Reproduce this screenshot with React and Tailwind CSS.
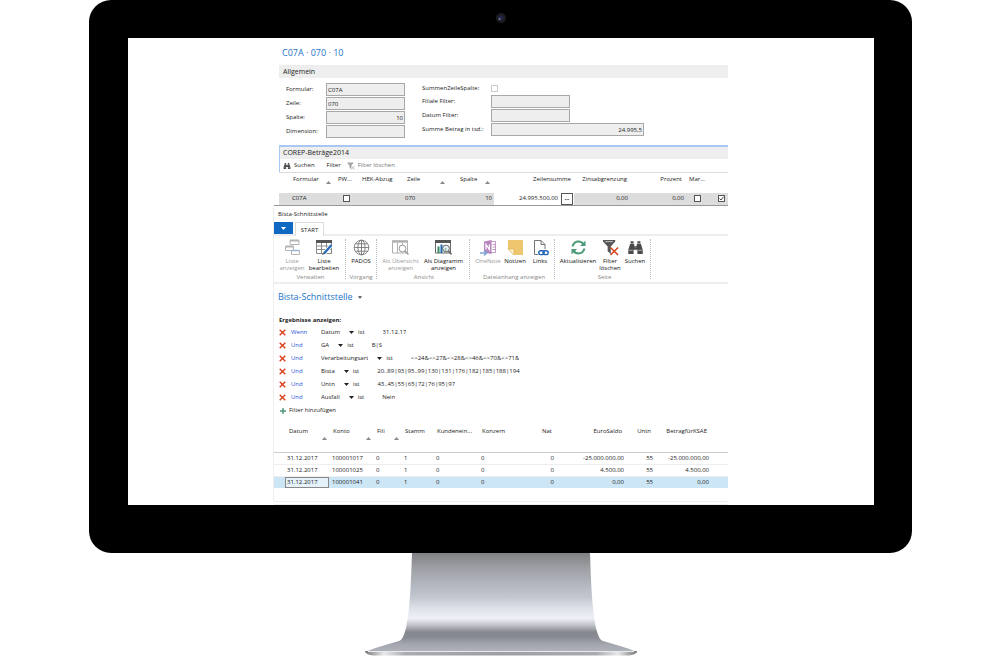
import React from 'react';

const formLeft = [
  { id: 'formular', label: 'Formular:', value: 'C07A' },
  { id: 'zeile', label: 'Zeile:', value: '070' },
  { id: 'spalte', label: 'Spalte:', value: '10', right: true },
  { id: 'dimension', label: 'Dimension:', value: '' },
];

const formRight = [
  { id: 'filiale', label: 'Filiale Filter:', value: '' },
  { id: 'datumfilter', label: 'Datum Filter:', value: '' },
  { id: 'summe', label: 'Summe Betrag in tsd.:', value: '24.995,5', right: true, wide: true },
];

const filters = [
  { word: 'Wenn', field: 'Datum', value: '31.12.17' },
  { word: 'Und', field: 'GA', value: 'B|S' },
  { word: 'Und', field: 'Verarbeitungsart', value: '<>24&<>27&<>28&<>46&<>70&<>71&' },
  { word: 'Und', field: 'Bista', value: '20..89|93|95..99|130|131|176|182|185|188|194' },
  { word: 'Und', field: 'Untn', value: '43..45|55|65|72|76|95|97' },
  { word: 'Und', field: 'Ausfall', value: 'Nein' },
];

const entries = [
  ['31.12.2017', '100001017', '0', '1', '0', '0', '0', '-25.000.000,00', '55', '-25.000.000,00'],
  ['31.12.2017', '100001025', '0', '1', '0', '0', '0', '4.500,00', '55', '4.500,00'],
  ['31.12.2017', '100001041', '0', '1', '0', '0', '0', '0,00', '55', '0,00'],
];

const entryHeads = [
  { name: 'Datum', sort: true },
  { name: 'Konto', sort: true },
  { name: 'Fili', sort: true },
  { name: 'Stamm' },
  { name: 'Kundenein...' },
  { name: 'Konzern' },
  { name: 'Nat', right: true },
  { name: 'EuroSaldo', right: true },
  { name: 'Untn', right: true },
  { name: 'BetragfürKSAE', right: true },
];

const SortMark = () => (
  <svg className="w-[5px] h-[3px] mb-[2px] shrink-0" viewBox="0 0 5 3">
    <path d="M0 3 2.5 0 5 3z" fill="#888" />
  </svg>
);

const Caret = ({ className }) => (
  <svg className={className} viewBox="0 0 5 3">
    <path d="M0 0h5L2.5 3z" fill="currentColor" />
  </svg>
);

const Binoculars = ({ className }) => (
  <svg className={className} viewBox="0 0 16 16" fill="#4a4a4a">
    <path d="M3.4 2h2.8v2H3.4zM9.8 2h2.8v2H9.8zM3 4.400h3.8v2.2h2.4V4.400H13l1.800 5.800V14H9.8v-3.800H6.2V14H1.200v-3.800z" />
    <path d="M1.6 10.6h3.8M10.6 10.6h3.8M7.2 7.6h1.6" stroke="#bbb" strokeWidth=".8" />
  </svg>
);

const FilterClear = ({ className, funnel, cross }) => (
  <svg className={className} viewBox="0 0 18 18">
    <path d="M1 1h13v1.6L9.3 8v8L6 13V8L1 2.6z" fill={funnel} />
    <path d="M3.5 2.8h8" stroke="#fff" strokeWidth=".7" />
    <path d="M9 9l8 8M17 9l-8 8" stroke={cross} strokeWidth="1.6" fill="none" />
  </svg>
);

const ListIcon = () => (
  <svg className="w-[17px] h-[17px]" viewBox="0 0 17 17" fill="#fff" stroke="#b4b4b4">
    <path d="M6 1.5h9v4H6zM1.5 7.5h8v4h-8zM7.5 11.5h8v4h-8z" />
    <path d="M6 1.5h9M1.5 7.5h8" strokeWidth="2" />
    <path d="M7.5 11.5h8" stroke="#9bb5d4" strokeWidth="1.5" />
  </svg>
);

const ListEditIcon = () => (
  <svg className="w-[17px] h-[17px]" viewBox="0 0 17 17" fill="none" stroke="#8a8a8a">
    <path d="M.5 2h15v12.5H.5zM.5 7h15M.5 10.5h15M5.5 3v11.5M10.5 3v11.5" />
    <path d="M0 2.5h16" stroke="#555" strokeWidth="3" />
    <path d="M15.5 6 8 14.5" stroke="#fff" strokeWidth="4" />
    <path d="M15.5 6 8 14.5" stroke="#1f66b5" strokeWidth="2.2" />
    <path d="m8.5 13.6-2 2.4" stroke="#444" />
  </svg>
);

const GlobeIcon = () => (
  <svg className="w-[17px] h-[17px]" viewBox="0 0 17 17" fill="none" stroke="#777" strokeWidth=".9">
    <circle cx="8.5" cy="8.5" r="7.3" />
    <ellipse cx="8.5" cy="8.5" rx="3.6" ry="7.3" />
    <path d="M8.5 1.2v14.6M1.2 8.5h14.6M2.4 4.8h12.2M2.4 12.2h12.2" />
  </svg>
);

const OverviewIcon = () => (
  <svg className="w-[17px] h-[17px]" viewBox="0 0 17 17" fill="none" stroke="#b0b0b0">
    <path d="M.5 2h15v12H.5zM5.5 4v10M10.5 4v4" />
    <path d="M0 2.5h16" strokeWidth="2.4" />
    <circle cx="10.5" cy="9.5" r="3.4" fill="#fff" stroke="#999" />
    <path d="m13 12 3.5 3.5" stroke="#999" strokeWidth="1.4" />
  </svg>
);

const ChartIcon = () => (
  <svg className="w-[17px] h-[17px]" viewBox="0 0 17 17" fill="none" stroke="#666">
    <path d="M.5 2h15v12H.5z" />
    <path d="M0 2.5h16" strokeWidth="3" stroke="#555" />
    <path d="M3.5 14V7.5" stroke="#2e8b62" strokeWidth="2" />
    <path d="M6.5 14V5.5" stroke="#1f66b5" strokeWidth="2" />
    <circle cx="11" cy="9.5" r="3.4" fill="#e4eef7" />
    <path d="M10.500 12V9" stroke="#8fc0aa" strokeWidth="1.6" />
    <path d="m13.4 12 3.2 3.4" strokeWidth="1.6" />
  </svg>
);

const OneNoteIcon = () => (
  <svg className="w-[17px] h-[17px]" viewBox="0 0 17 17" fill="none">
    <path d="M10 2.5h5.5v11H10M12.5 5.5h3M12.5 8h3M12.5 10.5h3" stroke="#c09ac4" />
    <path d="M4 2.5 11.5 1v14L4 13.5z" fill="#b884bd" />
    <path d="M6 10.5v-5l3.4 5v-5" stroke="#fff" strokeWidth="1.2" />
    <path d="M0 14h6M4 11.5 6.8 14 4 16.5" stroke="#7da7d6" strokeWidth="1.4" />
  </svg>
);

const NoteIcon = () => (
  <svg className="w-[17px] h-[17px]" viewBox="0 0 17 17">
    <path d="M1 1h15v15H7l-6-6z" fill="#eec66d" />
    <path d="M1 10h6v6z" fill="#fdf0cd" stroke="#d9ac48" strokeWidth=".6" />
  </svg>
);

const LinkIcon = () => (
  <svg className="w-[17px] h-[17px]" viewBox="0 0 17 17" fill="none">
    <path d="M2.5 1.5h6.5l4 4V10M2.5 1.5v14H6M9 1.5v4h4" stroke="#777" />
    <rect x="6.8" y="11.8" width="5.4" height="3.8" rx="1.9" stroke="#1f66b5" strokeWidth="1.4" />
    <rect x="11" y="11.8" width="5.2" height="3.8" rx="1.9" stroke="#1f66b5" strokeWidth="1.4" />
  </svg>
);

const RefreshIcon = () => (
  <svg className="w-[17px] h-[17px]" viewBox="0 0 17 17" fill="none" stroke="#4a9a77" strokeWidth="2">
    <path d="M2.5 7.5C3.5 4 6 2.5 8.5 2.5c2.3 0 4 1 5 3" />
    <path d="M14.5 9.5c-1 3.5-3.5 5-6 5-2.3 0-4-1-5-3" />
    <path d="M15.5 1.5V7H10zM1.5 15.5V10H7z" fill="#4a9a77" stroke="none" />
  </svg>
);

const groups = [
  {
    name: 'Verwalten',
    box: 'w-[72px] pl-[2px]',
    items: [
      { lines: ['Liste', 'anzeigen'], icon: <ListIcon />, width: 'w-8', off: true },
      { lines: ['Liste', 'bearbeiten'], icon: <ListEditIcon />, width: 'w-8' },
    ],
  },
  {
    name: 'Vorgang',
    box: 'w-[31px]',
    items: [{ lines: ['PADOS'], icon: <GlobeIcon />, width: 'w-[30px]' }],
  },
  {
    name: 'Ansicht',
    box: 'w-[93px] pl-[2px]',
    items: [
      { lines: ['Als Übersicht', 'anzeigen'], icon: <OverviewIcon />, width: 'w-[43px]', off: true },
      { lines: ['Als Diagramm', 'anzeigen'], icon: <ChartIcon />, width: 'w-[43px]' },
    ],
  },
  {
    name: 'Dateianhang anzeigen',
    box: 'w-[85px] pl-1',
    items: [
      { lines: ['OneNote'], icon: <OneNoteIcon />, width: 'w-7', off: true },
      { lines: ['Notizen'], icon: <NoteIcon />, width: 'w-[26px]' },
      { lines: ['Links'], icon: <LinkIcon />, width: 'w-6' },
    ],
  },
  {
    name: 'Seite',
    box: 'w-24 pl-1',
    items: [
      { lines: ['Aktualisieren'], icon: <RefreshIcon />, width: 'w-[38px]' },
      { lines: ['Filter', 'löschen'], icon: <FilterClear className="w-[17px] h-[17px]" funnel="#555" cross="#d9401c" />, width: 'w-[26px]' },
      { lines: ['Suchen'], icon: <Binoculars className="w-[17px] h-[17px]" />, width: 'w-6' },
    ],
  },
];

const Field = ({ id, label, value, right, wide, labelWidth }) => (
  <div className="flex items-center h-[13px]">
    <label htmlFor={id} className={`${labelWidth} shrink-0`}>{label}</label>
    <input
      id={id}
      readOnly
      defaultValue={value}
      className={`h-[13px] min-w-0 px-px leading-[11px] bg-[#eee] border border-[#a8a8a8] ${wide ? 'w-[153px]' : 'w-[79px]'} ${right ? 'text-right' : ''}`}
    />
  </div>
);

const Check = ({ label, checked, faint }) => (
  <span className="relative flex w-[7px] h-[7px]">
    <input
      type="checkbox"
      aria-label={label}
      defaultChecked={checked}
      className={`appearance-none w-[7px] h-[7px] bg-white border ${faint ? 'border-[#ccc]' : 'border-[#555]'}`}
    />
    {checked && (
      <svg className="absolute inset-0 pointer-events-none" viewBox="0 0 7 7" fill="none">
        <path d="M1.5 3.5 3 5l2.500-3.200" stroke="#333" strokeWidth=".9" />
      </svg>
    )}
  </span>
);

const CardForm = () => (
  <section className="pl-[5px]">
    <h1 className="pt-2 pb-[5px] pl-[3px] text-[9px] leading-[14px] text-[#1a73c7]">C07A · 070 · 10</h1>
    <h2 className="h-[13px] pl-1 bg-[#eee] text-[7px] leading-[13px]">Allgemein</h2>
    <div className="flex pt-[5px] pl-[7px] pb-[7px]">
      <div className="flex flex-col gap-px w-[136px]">
        {formLeft.map((f) => <Field key={f.id} {...f} labelWidth="w-10" />)}
      </div>
      <div className="flex flex-col gap-px">
        <div className="flex items-center h-[11px]">
          <span className="w-[69px]">SummenZeileSpalte:</span>
          <Check label="SummenZeileSpalte" faint />
        </div>
        {formRight.map((f) => <Field key={f.id} {...f} labelWidth="w-[69px]" />)}
      </div>
    </div>
  </section>
);

const Amounts = () => (
  <section>
    <div className="ml-[5px] border-t-2 border-l border-[#a9c7f5]">
      <h2 className="h-3 pl-[3px] bg-[#eee] text-[7px] leading-[12px]">COREP-Beträge2014</h2>
      <div className="flex items-center h-[13px] pl-[3px]">
        <button className="flex items-center gap-[3px]"><Binoculars className="w-2 h-2" />Suchen</button>
        <button className="ml-3">Filter</button>
        <button className="flex items-center gap-[3px] ml-[6px] text-[#777]">
          <FilterClear className="w-2 h-2" funnel="#999" cross="#aaa" />Filter löschen
        </button>
      </div>
    </div>
    <table className="w-full table-fixed border-collapse whitespace-nowrap">
      <colgroup>
        <col className="w-[5px]" /><col className="w-[55px]" /><col className="w-6" /><col className="w-11" />
        <col className="w-[47px]" /><col className="w-[45px]" /><col className="w-20" /><col className="w-[57px]" />
        <col className="w-14" /><col className="w-[22px]" /><col className="w-[19px]" />
      </colgroup>
      <thead>
        <tr className="h-5 align-top text-left leading-[13px] [&>th]:font-normal [&>th]:p-0">
          <th />
          <th className="border-t border-[#ddd]"><div className="flex items-end justify-between pl-[14px] pr-[3px]">Formular<SortMark /></div></th>
          <th className="border-t border-[#ddd]"><div className="pl-1">PW...</div></th>
          <th className="border-t border-[#ddd]"><div className="pl-1">HEK-Abzug</div></th>
          <th className="border-t border-[#ddd]"><div className="flex items-end justify-between pl-[5px] pr-1">Zeile<SortMark /></div></th>
          <th className="border-t border-[#ddd]"><div className="flex items-end justify-between pl-[11px] pr-1">Spalte<SortMark /></div></th>
          <th className="border-t border-[#ddd]"><div className="pr-[3px] text-right">Zeilensumme</div></th>
          <th className="border-t border-[#ddd]"><div className="pr-1 text-right">Zinsabgrenzung</div></th>
          <th className="border-t border-[#ddd]"><div className="pr-[5px] text-right">Prozent</div></th>
          <th className="border-t border-[#ddd]"><div className="pl-[2px]">Mar...</div></th>
          <th className="border-t border-[#ddd]" />
        </tr>
      </thead>
      <tbody>
        <tr className="h-[13px] border-b border-[#999] leading-[11px] [&>td]:p-0">
          <td />
          <td className="bg-[#ddd]"><div className="pl-[13px]">C07A</div></td>
          <td className="bg-[#ddd]"><div className="pl-[9px]"><Check label="PW" /></div></td>
          <td className="bg-[#ddd]" />
          <td className="bg-[#ddd]"><div className="pl-[3px]">070</div></td>
          <td className="bg-[#ddd]"><div className="pr-[2px] text-right">10</div></td>
          <td>
            <div className="flex items-center justify-end gap-[3px] pr-px">
              24.995.500,00
              <button className="w-3 h-3 border border-[#555] bg-white font-bold leading-[7px]">...</button>
            </div>
          </td>
          <td className="bg-[#ddd]"><div className="pr-[3px] text-right">0,00</div></td>
          <td className="bg-[#ddd]"><div className="pr-[3px] text-right">0,00</div></td>
          <td className="bg-[#ddd]"><div className="pl-[7px]"><Check label="Markiert" /></div></td>
          <td className="bg-[#ddd]"><div className="pl-[9px]"><Check label="Aktiv" checked /></div></td>
        </tr>
      </tbody>
    </table>
  </section>
);

const Ribbon = () => (
  <nav>
    <div className="h-4 pl-1 leading-4">Bista-Schnittstelle</div>
    <div className="flex h-3">
      <button aria-label="Menü" className="flex items-center justify-center w-[19px] bg-[#0f68c2] text-white">
        <Caret className="w-[5px] h-[3px]" />
      </button>
      <button className="relative z-10 w-[29px] h-[14px] ml-[2px] border border-b-0 border-[#ddd] bg-white leading-[12px]">START</button>
    </div>
    <div className="flex h-[50px] pt-[3px] border-y-2 border-[#eee]">
      {groups.map((g) => (
        <div key={g.name} className={`flex flex-col justify-between h-10 border-r border-dotted border-[#bbb] ${g.box}`}>
          <div className="flex items-start">
            {g.items.map((item) => (
              <button
                key={item.lines.join(' ')}
                disabled={item.off}
                className={`flex flex-col items-center gap-[2px] leading-[7px] whitespace-nowrap ${item.width} ${item.off ? 'text-[#999]' : 'text-[#111]'}`}
              >
                {item.icon}
                <span className="flex flex-col items-center">
                  {item.lines.map((line) => <span key={line}>{line}</span>)}
                </span>
              </button>
            ))}
          </div>
          <div className="h-1 text-center leading-[4px] whitespace-nowrap text-[#888]">{g.name}</div>
        </div>
      ))}
    </div>
  </nav>
);

const FilterPane = () => (
  <section className="pl-[5px]">
    <h1 className="flex items-center gap-[5px] pt-[6px] text-[9px] leading-[14px] text-[#1a73c7] -ml-px">
      Bista-Schnittstelle
      <Caret className="w-1 h-[3px] text-[#444]" />
    </h1>
    <h2 className="h-3 mt-[10px] font-bold leading-[12px]">Ergebnisse anzeigen:</h2>
    {filters.map((f) => (
      <div key={f.field} className="flex items-center h-[13px] leading-[13px]">
        <button aria-label={`${f.field} entfernen`} className="w-3">
          <svg className="w-[7px] h-[7px]" viewBox="0 0 7 7">
            <path d="m.7.7 5.6 5.6M6.3.7.7 6.3" stroke="#d9401c" strokeWidth="1.4" />
          </svg>
        </button>
        <span className="w-[30px] text-[#2a55d8]">{f.word}</span>
        <select aria-label="Feld" className="appearance-none field-sizing-content">
          <option>{f.field}</option>
        </select>
        <Caret className="w-[5px] h-[3px] ml-[9px] mr-1" />
        <span>ist</span>
        <input aria-label={`Wert ${f.field}`} defaultValue={f.value} className="field-sizing-content ml-[18px]" />
      </div>
    ))}
    <button className="flex items-center gap-[3px] h-[13px] pl-px">
      <svg className="w-[6px] h-[6px]" viewBox="0 0 6 6">
        <path d="M3 0v6M0 3h6" stroke="#4a9a77" strokeWidth="1.4" />
      </svg>
      Filter hinzufügen
    </button>
  </section>
);

const Entries = () => (
  <table className="w-full table-fixed border-collapse whitespace-nowrap">
    <colgroup>
      <col className="w-[11px]" /><col className="w-11" /><col className="w-11" /><col className="w-7" />
      <col className="w-8" /><col className="w-[45px]" /><col className="w-[42px]" /><col className="w-9" />
      <col className="w-[70px]" /><col className="w-[29px]" /><col className="w-14" /><col className="w-[17px]" />
    </colgroup>
    <thead>
      <tr className="h-[35px] align-top border-b border-[#ccc] [&>th]:font-normal [&>th]:p-0">
        <th />
        {entryHeads.map((h) => (
          <th key={h.name}>
            <div className={`pt-[10px] leading-[8px] ${h.right ? 'pr-1 text-right' : 'pl-1 text-left'}`}>{h.name}</div>
            {h.sort && <div className="flex justify-end pt-[2px] pr-[2px]"><SortMark /></div>}
          </th>
        ))}
        <th />
      </tr>
    </thead>
    <tbody>
      {entries.map((row, r) => (
        <tr key={row[1]} className={`h-3 leading-[11px] [&>td]:p-0 ${r === 2 ? 'bg-[#cde6f5]' : 'border-b border-[#eee]'}`}>
          <td />
          {row.map((cell, c) => (
            <td key={c}>
              <div className={`${c > 5 ? 'pr-[2px] text-right' : c === 0 ? 'pl-[2px]' : 'pl-[3px]'} ${c === 0 && r === 2 ? 'ring-1 ring-inset ring-[#888] bg-[#e6f2fa]' : ''}`}>
                {cell}
              </div>
            </td>
          ))}
          <td />
        </tr>
      ))}
    </tbody>
  </table>
);

const Stand = () => (
  <svg className="block w-[272px] h-[103px] mx-auto" viewBox="0 0 272 103">
    <defs>
      <linearGradient id="neck" x1="0" y1="0" x2="0" y2="1">
        <stop offset="0" stopColor="#808184" />
        <stop offset=".14" stopColor="#9b9da1" />
        <stop offset=".3" stopColor="#b0b4bc" />
        <stop offset=".45" stopColor="#c3c7cf" />
        <stop offset=".57" stopColor="#e0e3ea" />
        <stop offset=".66" stopColor="#eef0f8" />
        <stop offset=".72" stopColor="#c8cad0" />
        <stop offset=".8" stopColor="#85888f" />
        <stop offset=".85" stopColor="#878a92" />
        <stop offset=".92" stopColor="#a3a6ae" />
        <stop offset="1" stopColor="#b0b3bb" />
      </linearGradient>
      <linearGradient id="edge" x1="0" y1="0" x2="1" y2="0">
        <stop offset="0" stopColor="#777" />
        <stop offset=".07" stopColor="#e8e8ea" />
        <stop offset=".15" stopColor="#a9abb0" />
        <stop offset=".5" stopColor="#9c9ea4" />
        <stop offset=".85" stopColor="#a9abb0" />
        <stop offset=".93" stopColor="#e8e8ea" />
        <stop offset="1" stopColor="#777" />
      </linearGradient>
    </defs>
    <path d="M47 0h178c1 30 2 56 6 75 2 8 4 12 7 13 10 3 22 6 34 11H0c12-5 24-8 34-11 3-1 5-5 7-13 4-19 5-45 6-75z" fill="url(#neck)" />
    <path d="M0 98h272v1c-1 2-4 3-8 3.5H8C4 102 1 101 0 99z" fill="url(#edge)" />
    <path d="M3 98.500h266" stroke="#e9eaee" strokeWidth="1" />
  </svg>
);

const App = () => (
  <div className="min-h-screen bg-white pl-[89px] pr-[88px] font-['Open_Sans',sans-serif] text-[6px] text-[#222]">
    <main className="rounded-b-[22px] rounded-t-[22px] bg-black pl-[39px] pr-[38px] pb-12">
      <div className="flex items-center justify-center h-[38px] pb-[3px]">
        <svg className="w-[10px] h-[10px]" viewBox="0 0 10 10">
          <circle cx="5" cy="5" r="5" fill="#1c1c20" />
          <circle cx="5" cy="5" r="2.5" fill="#24244a" />
          <circle cx="3.5" cy="6" r="1" fill="#7a80a0" />
        </svg>
      </div>
      <div className="bg-white px-[146px]">
        <CardForm />
        <Amounts />
        <div className="-ml-px border-l border-[#eee] pb-[13px]">
          <Ribbon />
          <FilterPane />
          <Entries />
        </div>
        <div className="h-1 border-y border-[#eee]" />
      </div>
    </main>
    <Stand />
  </div>
);

export default App;
